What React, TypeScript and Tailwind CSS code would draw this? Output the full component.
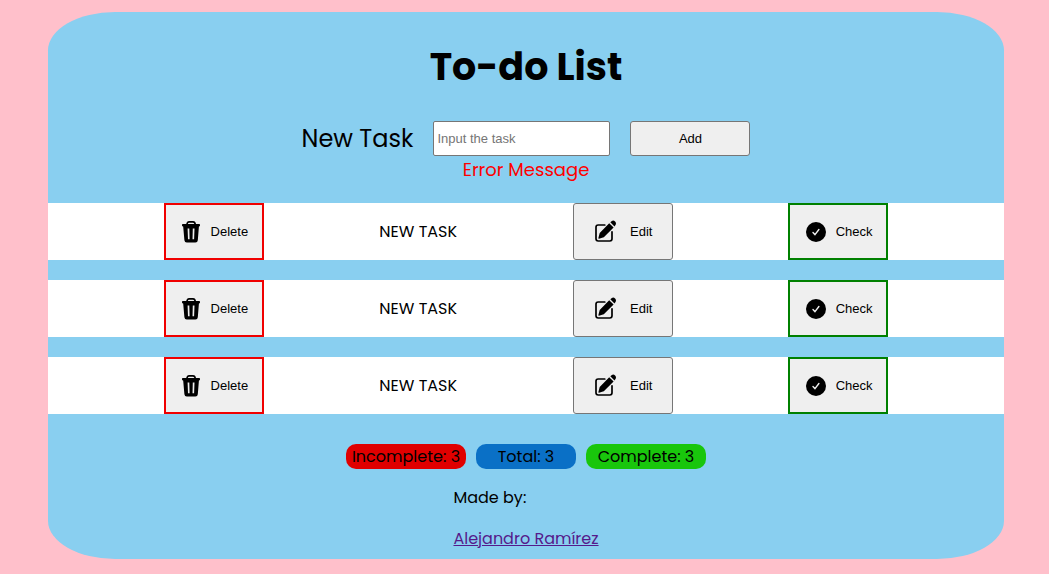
import React from "react";

function TrashIcon() {
  return (
    <svg viewBox="0 0 24 24" className="size-6" aria-hidden="true">
      <path d="M8 4.8C8 2.6 9 1.8 10.2 1.8H14C15.2 1.8 16.2 2.6 16.2 4.8" fill="none" stroke="#000" strokeWidth="1.7" />
      <rect x="3" y="4" width="18" height="2.4" rx="0.8" fill="#000" />
      <path
        fillRule="evenodd"
        d="M4.1 5.5H20L18.8 20.3Q18.6 22.6 16.4 22.6H7.8Q5.6 22.6 5.4 20.3ZM8.6 8.6L9 19.2H10.6L10.3 8.6ZM13.8 8.6L13.5 19.2H15.1L15.5 8.6Z"
        fill="#000"
      />
    </svg>
  );
}

function EditIcon() {
  return (
    <svg viewBox="0 0 24 24" className="size-6" aria-hidden="true">
      <path
        d="M11.8 5H5.2C3.8 5 3 5.8 3 7.2V18.8C3 20.2 3.8 21 5.2 21H16.8C18.2 21 19 20.2 19 18.8V11.8"
        fill="none"
        stroke="#000"
        strokeWidth="1.7"
        strokeLinecap="round"
      />
      <path d="M16.2 3.2L20.6 7.5L10.8 17.3L6 18.8Q5.2 18.9 5.4 18.1L6.7 12.9Z" fill="#000" />
      <path d="M17.3 2.2L18.9 0.9Q20.5 0 22.1 1.5Q23.7 3 22.7 4.8L21.5 6.4Z" fill="#000" />
    </svg>
  );
}

function CheckIcon() {
  return (
    <svg viewBox="0 0 24 24" className="size-6" aria-hidden="true">
      <circle cx="12" cy="12" r="10" fill="#000" />
      <path d="M9 12.6L11 14.7L14.9 9.5" fill="none" stroke="#efefef" strokeWidth="1.4" strokeLinecap="round" strokeLinejoin="round" />
    </svg>
  );
}

const actionButton =
  "flex h-[57px] w-[100px] items-center justify-evenly bg-[#efefef] px-1.5 font-['Liberation_Sans',sans-serif] text-[13px]";

function TaskRow({ name }: { name: string }) {
  return (
    <li className="flex items-center justify-evenly bg-white">
      <button type="button" className={`${actionButton} border-2 border-[#f00000]`}>
        <TrashIcon />
        Delete
      </button>
      <span>{name}</span>
      <button type="button" className={`${actionButton} rounded-[3px] border border-[#767676]`}>
        <EditIcon />
        Edit
      </button>
      <button type="button" className={`${actionButton} border-2 border-[#008000]`}>
        <CheckIcon />
        Check
      </button>
    </li>
  );
}

const tasks = ["NEW TASK", "NEW TASK", "NEW TASK"];

export default function App() {
  return (
    <div className="min-h-screen bg-[#ffc0cb] pt-3 pr-[45px] pb-[15px] pl-12 font-[Poppins,Inter,sans-serif] text-base text-black">
      <main className="flex flex-col rounded-[7%] bg-[#89cff0] pt-[25px] pb-2">
        <h1 className="text-center text-[38px] leading-[60px] font-bold">To-do List</h1>
        <form className="mt-6 flex h-[35px] items-center justify-center gap-5">
          <label htmlFor="task" className="text-2xl">
            New Task
          </label>
          <input
            id="task"
            type="text"
            placeholder="Input the task"
            className="h-full w-[177px] rounded-[2px] border border-[#767676] bg-white px-[3px] font-['Liberation_Sans',sans-serif] text-[13px] placeholder:text-[#757575]"
          />
          <button
            type="button"
            className="h-full w-[120px] rounded-[3px] border border-[#767676] bg-[#efefef] font-['Liberation_Sans',sans-serif] text-[13px]"
          >
            Add
          </button>
        </form>
        <p className="text-center text-lg leading-[27px] text-[#ff0000]">Error Message</p>
        <ul className="mt-5 flex flex-col gap-5">
          {tasks.map((task, index) => (
            <TaskRow key={index} name={task} />
          ))}
        </ul>
        <div className="mt-[30px] flex justify-center gap-2.5 text-center leading-[25px]">
          <p className="w-[120px] rounded-[10px] bg-[#e00000]">Incomplete: 3</p>
          <p className="w-[100px] rounded-[10px] bg-[#0a70c6]">Total: 3</p>
          <p className="w-[120px] rounded-[10px] bg-[#19c60c]">Complete: 3</p>
        </div>
        <footer className="mt-4 flex flex-col gap-4 self-center leading-[25px]">
          <p>Made by:</p>
          <a href="#author" className="text-[#551a8b] underline">
            Alejandro Ramírez
          </a>
        </footer>
      </main>
    </div>
  );
}
